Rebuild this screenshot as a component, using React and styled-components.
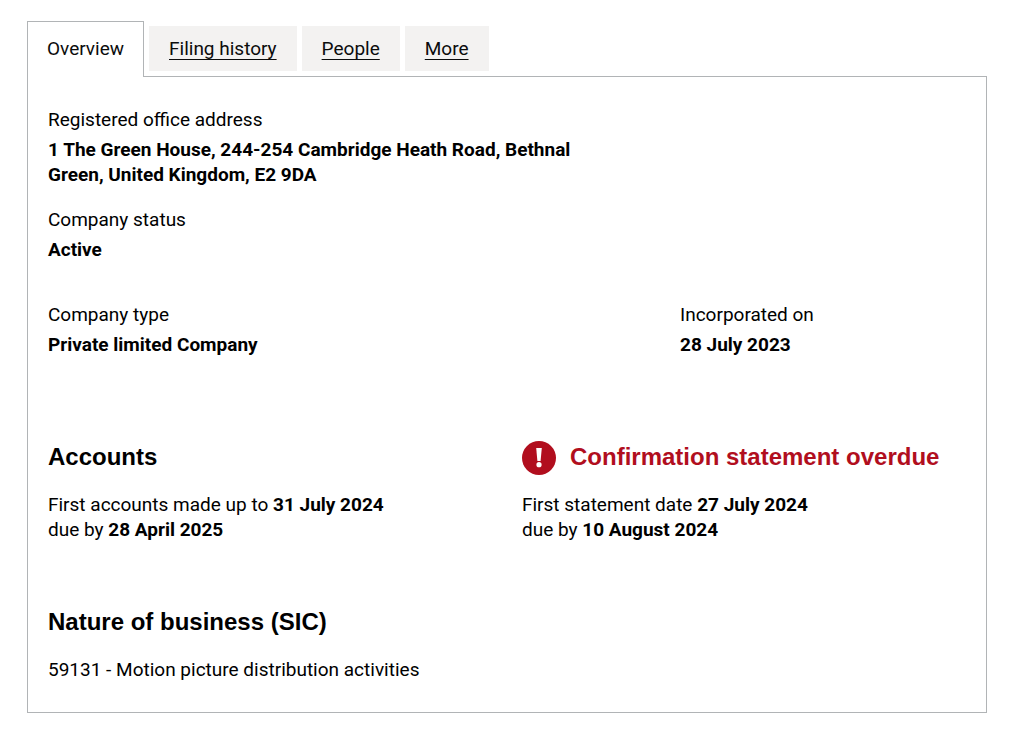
import React from 'react';
import styled, { createGlobalStyle } from 'styled-components';

const GlobalStyle = createGlobalStyle`
    *,
    *::before,
    *::after {
        box-sizing: border-box;
    }
    body {
        margin: 0;
        background: #fff;
        color: #000;
        font-family: Roboto, 'Liberation Sans', sans-serif;
        font-size: 19px;
        line-height: 25px;
    }
`;

const PageWrap = styled.main`
    max-width: 1013px;
    margin: 0 auto;
    padding: 21px 26px 35px 27px;
`;

const TabList = styled.ul`
    display: flex;
    align-items: flex-start;
    gap: 5px;
    margin: 0;
    padding: 0;
    list-style: none;
`;

const TabItem = styled.li`
    margin: ${({ $selected }) => ($selected ? '0 0 -1px' : '5px 0 0')};
    padding: ${({ $selected }) => ($selected ? '14px 19px 16px' : '10px 20px')};
    border: ${({ $selected }) => ($selected ? '1px solid #b1b4b6' : '0')};
    border-bottom: 0;
    background: ${({ $selected }) => ($selected ? '#fff' : '#f3f2f1')};
`;

const TabLink = styled.a`
    display: block;
    color: #0b0c0c;
    text-decoration: ${({ $selected }) => ($selected ? 'none' : 'underline')};
    text-decoration-thickness: 1px;
    text-decoration-skip-ink: none;
    text-underline-offset: 4px;
`;

const Panel = styled.section`
    padding: 30px 20px;
    border: 1px solid #b1b4b6;
`;

const DetailList = styled.dl`
    display: grid;
    gap: 20px;
    margin: 0 0 40px;
`;

const SplitDetailList = styled(DetailList)`
    grid-template-columns: repeat(3, 1fr);
    gap: 30px;
    margin-bottom: 85px;
    > :first-child {
        grid-column: span 2;
    }
`;

const Term = styled.dt`
    margin-bottom: 5px;
`;

const Description = styled.dd`
    max-width: 560px;
    margin: 0;
    font-weight: 700;
`;

const Columns = styled.div`
    display: grid;
    grid-template-columns: 1fr 1fr;
    gap: 30px;
    margin-bottom: 65px;
`;

const Heading = styled.h2`
    display: flex;
    align-items: center;
    gap: 14px;
    height: 30px;
    margin: 0 0 20px;
    color: ${({ $overdue }) => ($overdue ? '#b10e1e' : 'inherit')};
    font-family: 'Liberation Sans', Arial, sans-serif;
    font-size: 24px;
    font-weight: 700;
    line-height: 30px;
    white-space: nowrap;
`;

const Text = styled.p`
    margin: 0;
`;

const OverdueIcon = () => (
    <svg width="34" height="36" viewBox="0 0 34 36" aria-hidden="true">
        <circle cx="17" cy="19" r="17" fill="#b10e1e" />
        <path d="M14.2 9h5.6l-1.2 13h-3.2z" fill="#fff" />
        <circle cx="17" cy="25.7" r="2.6" fill="#fff" />
    </svg>
);

const tabs = ['Overview', 'Filing history', 'People', 'More'];

const Detail = ({ term, children }) => (
    <div>
        <Term>{term}</Term>
        <Description>{children}</Description>
    </div>
);

const App = () => {
    return (
        <>
            <GlobalStyle />
            <PageWrap>
                <TabList>
                    {tabs.map((tab, index) => (
                        <TabItem key={tab} $selected={index === 0}>
                            <TabLink
                                href="#overview"
                                $selected={index === 0}
                                aria-current={index === 0 ? 'page' : undefined}
                            >
                                {tab}
                            </TabLink>
                        </TabItem>
                    ))}
                </TabList>
                <Panel id="overview">
                    <DetailList>
                        <Detail term="Registered office address">
                            1 The Green House, 244-254 Cambridge Heath Road,
                            Bethnal Green, United Kingdom, E2 9DA
                        </Detail>
                        <Detail term="Company status">Active</Detail>
                    </DetailList>
                    <SplitDetailList>
                        <Detail term="Company type">
                            Private limited Company
                        </Detail>
                        <Detail term="Incorporated on">28 July 2023</Detail>
                    </SplitDetailList>
                    <Columns>
                        <div>
                            <Heading>Accounts</Heading>
                            <Text>
                                First accounts made up to{' '}
                                <strong>31 July 2024</strong>
                                <br />
                                due by <strong>28 April 2025</strong>
                            </Text>
                        </div>
                        <div>
                            <Heading $overdue>
                                <OverdueIcon />
                                Confirmation statement overdue
                            </Heading>
                            <Text>
                                First statement date{' '}
                                <strong>27 July 2024</strong>
                                <br />
                                due by <strong>10 August 2024</strong>
                            </Text>
                        </div>
                    </Columns>
                    <Heading>Nature of business (SIC)</Heading>
                    <Text>
                        59131 - Motion picture distribution activities
                    </Text>
                </Panel>
            </PageWrap>
        </>
    );
};

export default App;
